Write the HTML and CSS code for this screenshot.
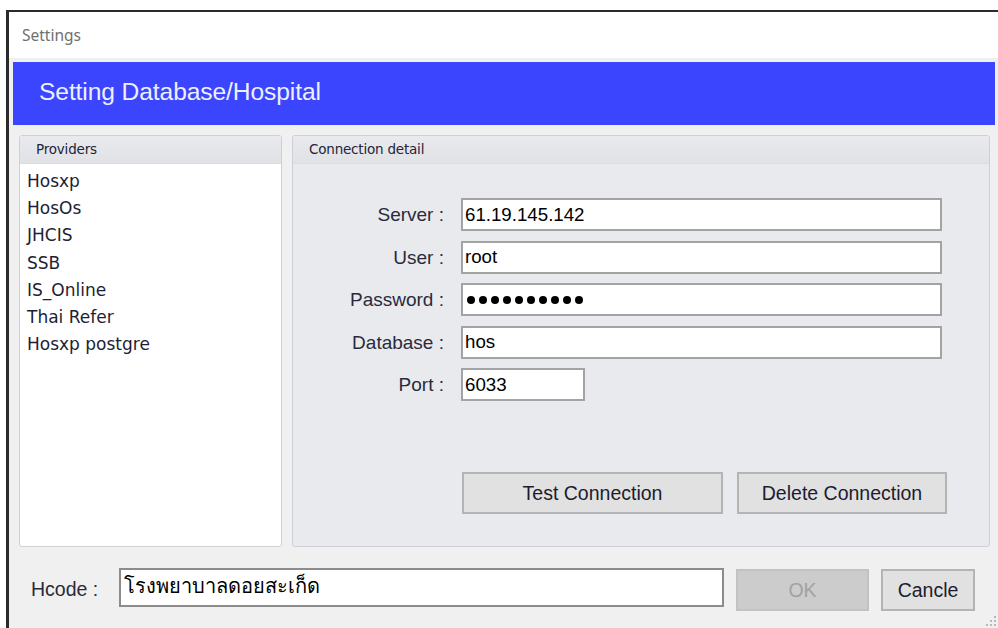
FILE: index.html
```html
<!DOCTYPE html>
<html lang="en">
<head>
<meta charset="utf-8">
<title>Settings</title>
<link rel="stylesheet" href="styles.css">
</head>
<body>
<div class="desktop">
  <div class="window">
    <div class="titlebar">Settings</div>
    <div class="client">
      <div class="banner">Setting Database/Hospital</div>

      <div class="main">
        <section class="group providers">
          <div class="group-head">Providers</div>
          <ul class="provider-list">
            <li>Hosxp</li>
            <li>HosOs</li>
            <li>JHCIS</li>
            <li>SSB</li>
            <li>IS_Online</li>
            <li>Thai Refer</li>
            <li>Hosxp postgre</li>
          </ul>
        </section>

        <section class="group connection">
          <div class="group-head">Connection detail</div>
          <div class="conn-body">
            <div class="form">
              <span class="field-label">Server :</span>
              <div class="field">61.19.145.142</div>
              <span class="field-label">User :</span>
              <div class="field">root</div>
              <span class="field-label">Password :</span>
              <div class="field password">
                <i></i><i></i><i></i><i></i><i></i><i></i><i></i><i></i><i></i><i></i>
              </div>
              <span class="field-label">Database :</span>
              <div class="field">hos</div>
              <span class="field-label">Port :</span>
              <div class="field port">6033</div>
            </div>
            <div class="actions">
              <button class="btn btn-test" type="button">Test Connection</button>
              <button class="btn btn-delete" type="button">Delete Connection</button>
            </div>
          </div>
        </section>
      </div>

      <div class="footer">
        <span class="hcode-label">Hcode :</span>
        <div class="field hcode">โรงพยาบาลดอยสะเก็ด</div>
        <button class="btn btn-ok" type="button" disabled>OK</button>
        <button class="btn btn-cancel" type="button">Cancle</button>
      </div>
    </div>

    <svg class="grip" width="12" height="12" viewBox="0 0 12 12" aria-hidden="true">
      <rect x="9" y="1" width="2" height="2" fill="#b8b8b8"/>
      <rect x="5" y="5" width="2" height="2" fill="#b8b8b8"/>
      <rect x="9" y="5" width="2" height="2" fill="#b8b8b8"/>
      <rect x="1" y="9" width="2" height="2" fill="#b8b8b8"/>
      <rect x="5" y="9" width="2" height="2" fill="#b8b8b8"/>
      <rect x="9" y="9" width="2" height="2" fill="#b8b8b8"/>
    </svg>
  </div>
</div>
</body>
</html>
```

FILE: styles.css
```css
* {
  box-sizing: border-box;
}

html, body {
  margin: 0;
  padding: 0;
  width: 998px;
  height: 628px;
  overflow: hidden;
  background: #ffffff;
}

.desktop {
  width: 998px;
  height: 628px;
  padding: 10px 0 0 6px;
}

/* dialog frame */
.window {
  position: relative;
  width: 992px;
  height: 618px;
  border-top: 2px solid #2b2b2b;
  border-left: 3px solid #2b2b2b;
  background: #f0f0f0;
  display: flex;
  flex-direction: column;
}

.titlebar {
  height: 46px;
  background: #ffffff;
  padding-left: 13px;
  display: flex;
  align-items: center;
  font-family: "Noto Sans", "Open Sans", sans-serif;
  font-size: 15.5px;
  color: #707070;
}

.client {
  flex: 1;
  padding: 4px 3px 0 4px;
  display: flex;
  flex-direction: column;
}

.banner {
  height: 63px;
  background: #3b45fd;
  padding-left: 26px;
  display: flex;
  align-items: center;
  padding-bottom: 3px;
  font-family: "Liberation Sans", Arial, sans-serif;
  font-size: 24.6px;
  letter-spacing: -0.1px;
  color: #eef0ff;
}

/* two group boxes */
.main {
  margin-top: 10px;
  height: 412px;
  padding: 0 5px 0 6px;
  display: flex;
  gap: 10px;
}

.group {
  border: 1px solid #cfd0d5;
  border-radius: 3px;
  display: flex;
  flex-direction: column;
  overflow: hidden;
}

.group-head {
  height: 28px;
  flex: none;
  line-height: 27px;
  background: linear-gradient(#e9eaed, #e1e2e6);
  border-bottom: 1px solid #dcdde1;
  font-family: "DejaVu Sans", Tahoma, sans-serif;
  font-size: 13.5px;
  letter-spacing: -0.2px;
  color: #24243a;
}

.providers {
  width: 263px;
  background: #ffffff;
}

.providers .group-head {
  padding-left: 16px;
}

.provider-list {
  list-style: none;
  margin: 0;
  padding: 4px 0 0 7px;
  font-family: "DejaVu Sans", Tahoma, sans-serif;
  font-size: 17px;
  line-height: 27.2px;
  color: #1e1e34;
}

.connection {
  flex: 1;
  background: #e9eaee;
}

.connection .group-head {
  padding-left: 16px;
}

.conn-body {
  padding-top: 34px;
}

.form {
  display: grid;
  grid-template-columns: 151px 481px;
  grid-auto-rows: 33px;
  column-gap: 17px;
  row-gap: 9.5px;
  align-items: center;
}

.field-label {
  text-align: right;
  font-family: "Liberation Sans", Arial, sans-serif;
  font-size: 19px;
  color: #2a2a3c;
  padding-top: 1px;
}

.field {
  height: 33px;
  background: #ffffff;
  border: 2px solid #a3a3a3;
  padding-left: 2px;
  display: flex;
  align-items: center;
  font-family: "Liberation Sans", Arial, sans-serif;
  font-size: 18.7px;
  color: #000000;
}

.field.port {
  width: 124px;
}

.field.password {
  gap: 4px;
  padding-left: 4px;
}

.field.password i {
  width: 8px;
  height: 8px;
  border-radius: 50%;
  background: #000000;
}

.actions {
  display: flex;
  gap: 14px;
  margin-top: 71px;
  padding-left: 169px;
}

.btn {
  height: 42px;
  background: #e1e1e1;
  border: 2px solid #b4b4b4;
  border-radius: 0;
  padding: 0;
  font-family: "Liberation Sans", Arial, sans-serif;
  font-size: 19.5px;
  color: #1c1c30;
}

.btn-test {
  width: 261px;
}

.btn-delete {
  width: 210px;
}

/* bottom bar */
.footer {
  display: flex;
  align-items: flex-start;
  padding: 21px 0 0 18px;
}

.hcode-label {
  width: 88px;
  height: 39px;
  display: flex;
  align-items: center;
  padding-top: 3px;
  font-family: "Liberation Sans", Arial, sans-serif;
  font-size: 19.5px;
  color: #2a2a3c;
}

.field.hcode {
  width: 605px;
  height: 39px;
  border-color: #8c8c8c;
  padding-left: 3px;
  padding-bottom: 4px;
  font-family: "Liberation Sans", "Noto Sans", Tahoma, sans-serif;
  font-size: 20px;
}

.btn-ok {
  width: 133px;
  margin: 1px 0 0 12px;
  background: #cccccc;
  border-color: #c2c2c2;
  color: #a2a2a2;
}

.btn-cancel {
  width: 94px;
  margin: 1px 0 0 12px;
}

.grip {
  position: absolute;
  right: 1px;
  bottom: 1px;
}
```
